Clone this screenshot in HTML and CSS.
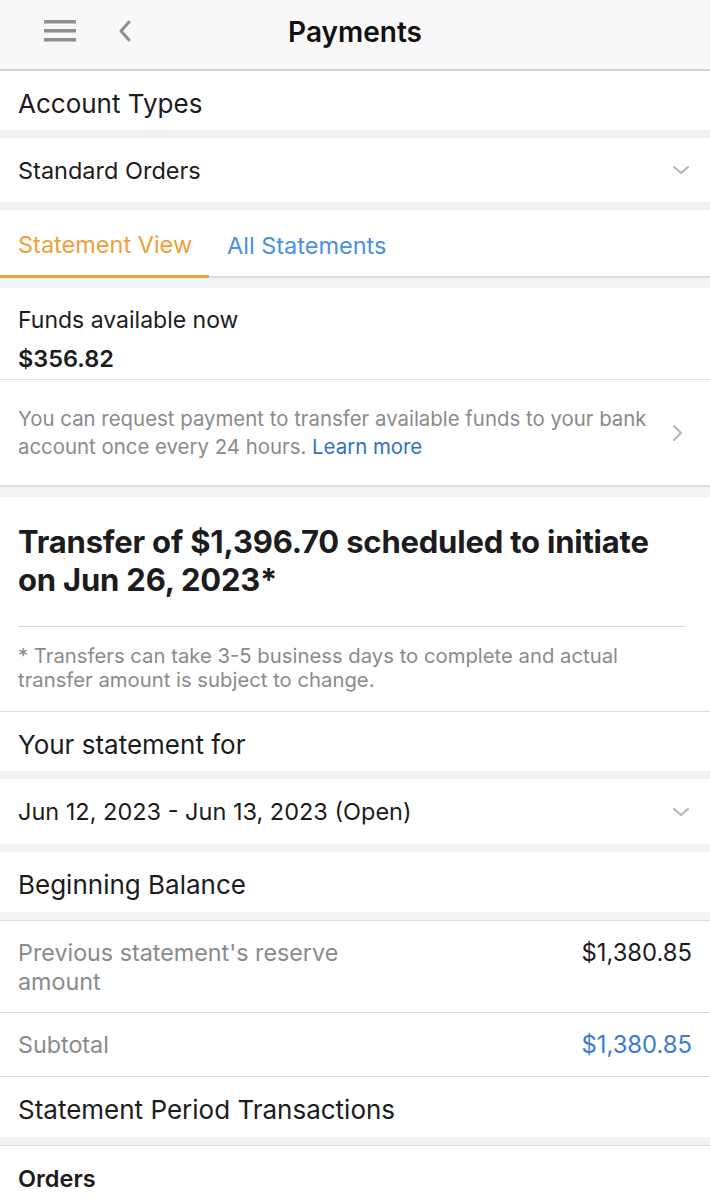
FILE: index.html
```html
<!DOCTYPE html>
<html lang="en">
<head>
<meta charset="utf-8">
<title>Payments</title>
<link rel="stylesheet" href="styles.css">
</head>
<body>
<header class="topbar">
  <div class="topbar-left">
    <svg class="icon-menu" width="34" height="24" viewBox="0 0 34 24" aria-hidden="true">
      <rect x="1" y="1" width="32" height="3.5" fill="#8e8e93"/>
      <rect x="1" y="10" width="32" height="3.5" fill="#8e8e93"/>
      <rect x="1" y="19" width="32" height="3.5" fill="#8e8e93"/>
    </svg>
    <svg class="icon-back" width="14" height="22" viewBox="0 0 14 22" aria-hidden="true">
      <path d="M11 2 L3 11 L11 20" fill="none" stroke="#8e8e93" stroke-width="3" stroke-linecap="round" stroke-linejoin="round"/>
    </svg>
  </div>
  <h1 class="title">Payments</h1>
</header>

<main class="page">
  <section class="card row row-h59 row-head">
    <span class="head-label">Account Types</span>
  </section>

  <section class="card row row-h64 gap-top">
    <span class="label">Standard Orders</span>
    <svg class="chev-down" width="18" height="10" viewBox="0 0 18 10" aria-hidden="true">
      <path d="M2 2 L9 8 L16 2" fill="none" stroke="#b4b4b8" stroke-width="2" stroke-linecap="round" stroke-linejoin="round"/>
    </svg>
  </section>

  <nav class="card tabs gap-top">
    <span class="tab tab-active">Statement View</span>
    <span class="tab tab-link">All Statements</span>
  </nav>

  <section class="card funds gap-top10">
    <div class="funds-main">
      <div class="label">Funds available now</div>
      <div class="amount">$356.82</div>
    </div>
    <div class="funds-info">
      <p class="info-text">You can request payment to transfer available funds to your bank account once every 24 hours. <span class="link">Learn more</span></p>
      <svg class="chev-right" width="12" height="18" viewBox="0 0 12 18" aria-hidden="true">
        <path d="M2 2 L9 9 L2 16" fill="none" stroke="#b4b4b8" stroke-width="2" stroke-linecap="round" stroke-linejoin="round"/>
      </svg>
    </div>
  </section>

  <section class="card transfer gap-top10">
    <h2 class="transfer-title">Transfer of $1,396.70 scheduled to initiate on Jun 26, 2023*</h2>
    <hr class="transfer-rule">
    <p class="footnote">* Transfers can take 3-5 business days to complete and actual transfer amount is subject to change.</p>
  </section>

  <section class="card row row-h60 row-head bordered-top">
    <span class="head-label">Your statement for</span>
  </section>

  <section class="card row row-h65 gap-top">
    <span class="label">Jun 12, 2023 - Jun 13, 2023 (Open)</span>
    <svg class="chev-down" width="18" height="10" viewBox="0 0 18 10" aria-hidden="true">
      <path d="M2 2 L9 8 L16 2" fill="none" stroke="#b4b4b8" stroke-width="2" stroke-linecap="round" stroke-linejoin="round"/>
    </svg>
  </section>

  <section class="card row row-h60 row-head gap-top">
    <span class="head-label">Beginning Balance</span>
  </section>

  <section class="card line-item line-tall gap-top-line">
    <span class="item-label">Previous statement's reserve amount</span>
    <span class="item-value">$1,380.85</span>
  </section>

  <section class="card line-item line-short bordered-top">
    <span class="item-label">Subtotal</span>
    <span class="item-value item-value-blue">$1,380.85</span>
  </section>

  <section class="card row row-h61 row-head bordered-top">
    <span class="head-label">Statement Period Transactions</span>
  </section>

  <section class="card orders gap-top-line">
    <span class="orders-title">Orders</span>
  </section>
</main>
</body>
</html>
```

FILE: styles.css
```css
* { box-sizing: border-box; }

html, body {
  margin: 0;
  padding: 0;
}

body {
  width: 710px;
  min-height: 1200px;
  background: #f1f2f4;
  font-family: Inter, "Liberation Sans", Arial, sans-serif;
  color: #1c1c1e;
  overflow: hidden;
}

.topbar {
  position: relative;
  height: 71px;
  background: #f8f8f9;
  border-bottom: 2px solid #d4d4d7;
  display: flex;
  align-items: center;
  justify-content: center;
}

.topbar-left {
  position: absolute;
  left: 43px;
  top: 19px;
  display: flex;
  align-items: center;
  gap: 41px;
}

.title {
  margin: 0;
  font-size: 28px;
  font-weight: 600;
  color: #111;
  padding-bottom: 6px;
}

.page {
  display: flex;
  flex-direction: column;
}

.card {
  background: #fff;
}

.gap-top { margin-top: 8px; }
.gap-top10 { margin-top: 10px; }
.gap-top-line { margin-top: 8px; border-top: 1px solid #d9d9dc; }
.bordered-top { border-top: 1px solid #dcdcdf; }

.row {
  display: flex;
  align-items: center;
  justify-content: space-between;
  padding: 0 20px 0 18px;
}

.row-head { padding-top: 5px; }

.row-h59 { height: 59px; }
.row-h60 { height: 60px; }
.row-h61 { height: 61px; }
.row-h64 { height: 64px; }
.row-h65 { height: 65px; }

.head-label {
  font-size: 26px;
  color: #1c1c1e;
}

.label {
  font-size: 23.5px;
  color: #1c1c1e;
}

.tabs {
  height: 68px;
  display: flex;
  align-items: stretch;
  border-bottom: 2px solid #dcdcdf;
}

.tab {
  display: flex;
  align-items: center;
  font-size: 23.5px;
  padding-top: 4px;
}

.tab-active {
  color: #f0a03a;
  width: 209px;
  padding-left: 18px;
  border-bottom: 3px solid #f0a03a;
  margin-bottom: -2px;
}

.tab-link {
  color: #4a8fe0;
  padding-left: 18px;
}

.funds {
  display: flex;
  flex-direction: column;
  border-bottom: 2px solid #dcdcdf;
}

.funds-main {
  height: 92px;
  padding: 18px 18px 0;
  border-bottom: 1px solid #e3e3e6;
  display: flex;
  flex-direction: column;
  gap: 10px;
}

.funds-main .label { font-size: 23px; }

.amount {
  font-size: 23.5px;
  font-weight: 600;
  color: #1c1c1e;
}

.funds-info {
  height: 105px;
  display: flex;
  align-items: center;
  justify-content: space-between;
  padding: 0 26px 0 18px;
}

.info-text {
  margin: 0;
  width: 640px;
  font-size: 20.4px;
  line-height: 28px;
  color: #8a8a8e;
}

.link { color: #2f72c4; }

.transfer {
  height: 214px;
  padding: 26px 25px 0 18px;
  display: flex;
  flex-direction: column;
}

.transfer-title {
  margin: 0;
  font-size: 31px;
  font-weight: 700;
  line-height: 38px;
  color: #1c1c1e;
  letter-spacing: -0.2px;
}

.transfer-rule {
  margin: 27px 0 0;
  border: 0;
  border-top: 1px solid #d9d9dc;
}

.footnote {
  margin: 17px 0 0;
  font-size: 20.3px;
  line-height: 24px;
  color: #8a8a8e;
}

.line-item {
  display: flex;
  align-items: flex-start;
  justify-content: space-between;
  padding: 0 18px;
}

.line-tall { height: 92px; padding-top: 17px; }
.line-short { height: 64px; align-items: center; }

.item-label {
  width: 360px;
  font-size: 23.3px;
  line-height: 29px;
  color: #8a8a8e;
}

.item-value {
  font-size: 23.8px;
  line-height: 29px;
  color: #1c1c1e;
}

.item-value-blue { color: #3a7bd5; }

.orders {
  height: 60px;
  padding: 18px 18px 0;
}

.orders-title {
  font-size: 23.5px;
  font-weight: 600;
  color: #1c1c1e;
}
```
